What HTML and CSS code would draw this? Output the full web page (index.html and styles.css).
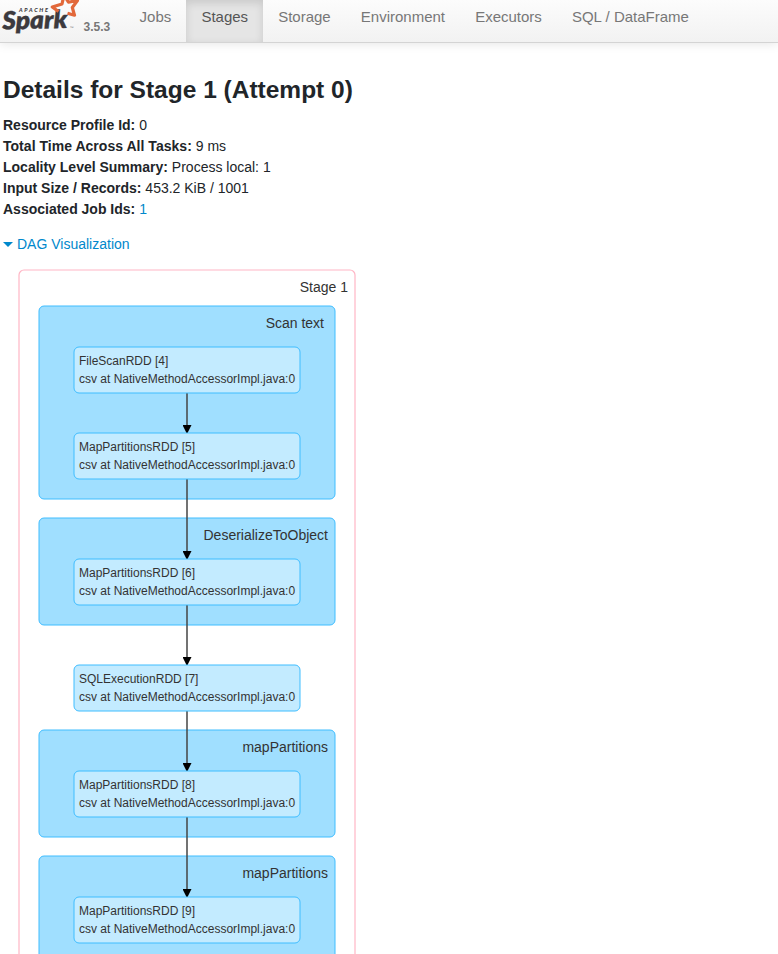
FILE: index.html
```html
<!DOCTYPE html>
<html lang="en">
<head>
<meta charset="utf-8">
<title>Details for Stage 1 (Attempt 0)</title>
<link rel="stylesheet" href="styles.css">
</head>
<body>
<nav class="navbar">
  <a class="brand" href="#">
    <svg class="logo" width="80" height="42" viewBox="0 0 80 42" role="img" aria-label="Apache Spark">
      <text class="logo-small" x="19" y="12" textLength="29">APACHE</text>
      <text class="logo-word" x="2.5" y="29.5" textLength="65" lengthAdjust="spacingAndGlyphs" transform="rotate(-1.5 2 29)">Spark</text>
      <path class="star" d="M58.5 11.5 L52.3 7 L62 4 L64 -5 L68.5 2.2 L77.5 .5 L72.3 7.5 L74.5 15.2 L67.5 13.2"/>
      <text class="logo-tm" x="69.5" y="29">™</text>
    </svg>
    <span class="version">3.5.3</span>
  </a>
  <ul class="tabs">
    <li><a href="#">Jobs</a></li>
    <li class="active"><a href="#">Stages</a></li>
    <li><a href="#">Storage</a></li>
    <li><a href="#">Environment</a></li>
    <li><a href="#">Executors</a></li>
    <li><a href="#">SQL / DataFrame</a></li>
  </ul>
</nav>
<main>
  <h1>Details for Stage 1 (Attempt 0)</h1>
  <ul class="summary">
    <li><strong>Resource Profile Id:</strong> 0</li>
    <li><strong class="wide">Total Time Across All Tasks:</strong> 9 ms</li>
    <li><strong>Locality Level Summary:</strong> Process local: 1</li>
    <li><strong>Input Size / Records:</strong> 453.2 KiB / 1001</li>
    <li><strong>Associated Job Ids:</strong> <a href="#">1</a></li>
  </ul>
  <a class="dag-toggle" href="#"><span class="caret"></span>DAG Visualization</a>
  <svg class="dag" width="370" height="694" viewBox="0 260 370 694">
    <defs>
      <marker id="arrow" viewBox="0 0 10 10" refX="9" refY="5" markerWidth="8" markerHeight="6" orient="auto">
        <path d="M0 0L10 5L0 10z"/>
      </marker>
    </defs>
    <rect class="stage" x="19" y="270" width="336" height="760" rx="5"/>
    <text class="label" x="348" y="292">Stage 1</text>
    <g class="cluster">
      <rect x="39" y="306" width="296" height="193" rx="5"/>
      <rect x="39" y="518" width="296" height="107" rx="5"/>
      <rect x="39" y="730" width="296" height="107" rx="5"/>
      <rect x="39" y="856" width="296" height="107" rx="5"/>
    </g>
    <text class="label" x="324" y="328">Scan text</text>
    <text class="label" x="328" y="540">DeserializeToObject</text>
    <text class="label" x="328" y="752">mapPartitions</text>
    <text class="label" x="328" y="878">mapPartitions</text>
    <g class="edge">
      <path d="M187 393V433"/>
      <path d="M187 479V559"/>
      <path d="M187 605V665"/>
      <path d="M187 711V771"/>
      <path d="M187 817V897"/>
    </g>
    <g class="node">
      <rect x="74" y="347" width="226" height="46" rx="5"/>
      <text x="79" y="365">FileScanRDD [4]</text><text x="79" y="383">csv at NativeMethodAccessorImpl.java:0</text>
      <rect x="74" y="433" width="226" height="46" rx="5"/>
      <text x="79" y="451">MapPartitionsRDD [5]</text><text x="79" y="469">csv at NativeMethodAccessorImpl.java:0</text>
      <rect x="74" y="559" width="226" height="46" rx="5"/>
      <text x="79" y="577">MapPartitionsRDD [6]</text><text x="79" y="595">csv at NativeMethodAccessorImpl.java:0</text>
      <rect x="74" y="665" width="226" height="46" rx="5"/>
      <text x="79" y="683">SQLExecutionRDD [7]</text><text x="79" y="701">csv at NativeMethodAccessorImpl.java:0</text>
      <rect x="74" y="771" width="226" height="46" rx="5"/>
      <text x="79" y="789">MapPartitionsRDD [8]</text><text x="79" y="807">csv at NativeMethodAccessorImpl.java:0</text>
      <rect x="74" y="897" width="226" height="46" rx="5"/>
      <text x="79" y="915">MapPartitionsRDD [9]</text><text x="79" y="933">csv at NativeMethodAccessorImpl.java:0</text>
    </g>
  </svg>
</main>
</body>
</html>
```
FILE: styles.css
```css
* { box-sizing: border-box; }
body {
  margin: 0;
  height: 954px;
  overflow: hidden;
  background: #fff;
  color: #212529;
  font: 14px/21px "Liberation Sans", Arial, sans-serif;
}
a { color: #0088cc; text-decoration: none; }
.navbar {
  display: flex;
  height: 43px;
  background: linear-gradient(#fcfcfc, #f2f2f2);
  border-bottom: 1px solid #d4d4d4;
  box-shadow: 0 1px 10px rgba(0, 0, 0, .1);
}
.brand { display: flex; width: 124.6px; }
.logo { display: block; flex: none; }
.star { fill: none; stroke: #e2683a; stroke-width: 3.2; stroke-linejoin: round; }
.logo-small { font: italic 900 5.5px Lato, sans-serif; fill: #3c3a3e; }
.logo-word { font: italic 800 25px Lato, sans-serif; fill: #3c3a3e; stroke: #3c3a3e; stroke-width: .3px; }
.logo-tm { font: 4px "Liberation Sans", sans-serif; fill: #777; }
.version { margin: 17px 0 0 3.6px; font-size: 12px; font-weight: bold; line-height: 20px; color: #777; }
.tabs { display: flex; margin: 0; padding: 0; list-style: none; }
.tabs a { display: block; height: 42px; padding: 6px 15px 0; font-size: 15px; line-height: 22px; color: #777; }
.tabs li + li { margin-left: .1px; }
.tabs .active a { background: #e5e5e5; color: #555; box-shadow: inset 0 3px 8px rgba(0, 0, 0, .125); }
main { display: flex; flex-direction: column; align-items: flex-start; }
h1 { margin: 32px 0 0 3px; font-size: 24.5px; line-height: 29px; }
.summary { margin: 11px 0 0 3px; padding: 0; list-style: none; }
.wide { letter-spacing: .03px; }
.dag-toggle { display: flex; align-items: center; margin: 14px 0 0 3px; }
.caret { width: 10px; height: 5px; margin-right: 4px; background: #0088cc; clip-path: polygon(0 0, 100% 0, 50% 100%); }
.dag { display: block; margin-top: 5px; }
.dag text { fill: #333; }
.stage { fill: #fff; stroke: #ffb6c5; stroke-width: 1.2px; }
.cluster rect { fill: #a0dfff; stroke: #3ebdff; stroke-width: 1px; }
.node rect { fill: #c3ebff; stroke: #3ebdff; stroke-width: 1px; }
.node text { font-size: 12px; }
.dag .label { font-size: 14px; text-anchor: end; }
.edge path { fill: none; stroke: #444; stroke-width: 1.5px; marker-end: url(#arrow); }
#arrow path { fill: #000; stroke: none; }
```
